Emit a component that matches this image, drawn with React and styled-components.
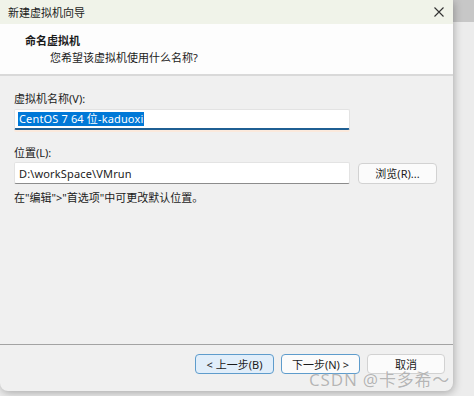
import React from "react";
import styled, { createGlobalStyle } from "styled-components";

const GlobalStyle = createGlobalStyle`
  html, body {
    margin: 0;
    padding: 0;
  }
  body {
    width: 474px;
    height: 396px;
    overflow: hidden;
    background: linear-gradient(#c7c7c7 0, #c7c7c7 22px, #ececec 22px);
    font-family: "Noto Sans", "Noto Sans CJK SC", sans-serif;
  }
`;

const Screen = styled.div`
  position: relative;
  width: 474px;
  height: 396px;
  display: flex;
  align-items: flex-start;
`;

const Dialog = styled.div`
  width: 453px;
  height: 391px;
  display: flex;
  flex-direction: column;
  background: #f0f0f0;
  border-radius: 0 0 8px 8px;
  box-shadow: 1px 2px 8px rgba(0, 0, 0, 0.28);
  overflow: hidden;
  font-size: 11px;
  color: #1b1b1b;
`;

const TitleBar = styled.div`
  height: 24px;
  flex-shrink: 0;
  display: flex;
  align-items: center;
  justify-content: space-between;
  padding: 0 9px 0 8px;
  background: #f0f3e9;
`;

const Header = styled.div`
  height: 52px;
  flex-shrink: 0;
  display: flex;
  flex-direction: column;
  padding-top: 9px;
  box-sizing: border-box;
  background: #fdfdfd;
  border-bottom: 2px solid #d9d9d9;
`;

const HeaderTitle = styled.div`
  font-weight: 700;
  padding-left: 25px;
  line-height: 16px;
`;

const HeaderSub = styled.div`
  padding-left: 50px;
  line-height: 17px;
`;

const Body = styled.div`
  flex: 1;
  display: flex;
  flex-direction: column;
  padding: 15px 0 0 14px;
`;

const Label = styled.div`
  line-height: 15px;
  margin-bottom: ${(p) => p.$gap || 3}px;
`;

const Row = styled.div`
  display: flex;
  align-items: center;
  gap: 8px;
`;

const Input = styled.div`
  width: 336px;
  height: ${(p) => (p.$focused ? 21 : 22)}px;
  box-sizing: border-box;
  display: flex;
  align-items: center;
  padding-left: ${(p) => (p.$focused ? 3 : 4)}px;
  background: #fff;
  border: 1px solid #e3e3e3;
  border-bottom: ${(p) => (p.$focused ? "2px solid #1f5f93" : "1px solid #8c8c8c")};
  border-radius: 2px;
  box-shadow: ${(p) => (p.$focused ? "0 2px 0 #fbe9dc" : "none")};
  margin-bottom: ${(p) => p.$mb || 0}px;
  letter-spacing: 0.15px;
`;

const Selected = styled.span`
  background: #0078d7;
  color: #fff;
  padding: 0 1px;
  line-height: 14px;
`;

const Hint = styled.div`
  margin-top: 6px;
  line-height: 15px;
`;

const Footer = styled.div`
  height: 29px;
  flex-shrink: 0;
  display: flex;
  justify-content: flex-end;
  gap: 7px;
  padding: 9px 8px 8px 0;
  border-top: 1px solid #a3a3a3;
`;

const Button = styled.div`
  width: ${(p) => p.$w || 79}px;
  height: ${(p) => p.$h || 20}px;
  box-sizing: border-box;
  display: flex;
  align-items: center;
  justify-content: center;
  border-radius: 4px;
  border: 1px solid ${(p) => (p.$blue ? "#5e9ccc" : "#d2d2d2")};
  background: ${(p) => (p.$active ? "#e1eefa" : "#fbfbfb")};
  color: #1b1b1b;
  font-size: 11px;
`;

const Watermark = styled.div`
  position: absolute;
  left: 309px;
  top: 366px;
  font-size: 17px;
  letter-spacing: 0.8px;
  color: rgba(150, 150, 150, 0.7);
  text-shadow: 0 0 1px rgba(255, 255, 255, 0.9);
  font-family: "Noto Sans", "Noto Sans CJK SC", sans-serif;
  pointer-events: none;
`;

const CloseIcon = () => (
  <svg width="10" height="10" viewBox="0 0 10 10">
    <path d="M0.5 0.5 L9.5 9.5 M9.5 0.5 L0.5 9.5" stroke="#333" strokeWidth="1.1" />
  </svg>
);

export default function App() {
  return (
    <Screen>
      <GlobalStyle />
      <Dialog>
        <TitleBar>
          <span>新建虚拟机向导</span>
          <CloseIcon />
        </TitleBar>
        <Header>
          <HeaderTitle>命名虚拟机</HeaderTitle>
          <HeaderSub>您希望该虚拟机使用什么名称?</HeaderSub>
        </Header>
        <Body>
          <Label>虚拟机名称(V):</Label>
          <Input $focused $mb={15}>
            <Selected>CentOS 7 64 位-kaduoxi</Selected>
          </Input>
          <Label $gap={2}>位置(L):</Label>
          <Row>
            <Input>D:\workSpace\VMrun</Input>
            <Button $h={21}>浏览(R)...</Button>
          </Row>
          <Hint>在"编辑"&gt;"首选项"中可更改默认位置。</Hint>
        </Body>
        <Footer>
          <Button $blue $active>&lt; 上一步(B)</Button>
          <Button $blue>下一步(N) &gt;</Button>
          <Button $w={78}>取消</Button>
        </Footer>
      </Dialog>
      <Watermark>CSDN @卡多希～</Watermark>
    </Screen>
  );
}
